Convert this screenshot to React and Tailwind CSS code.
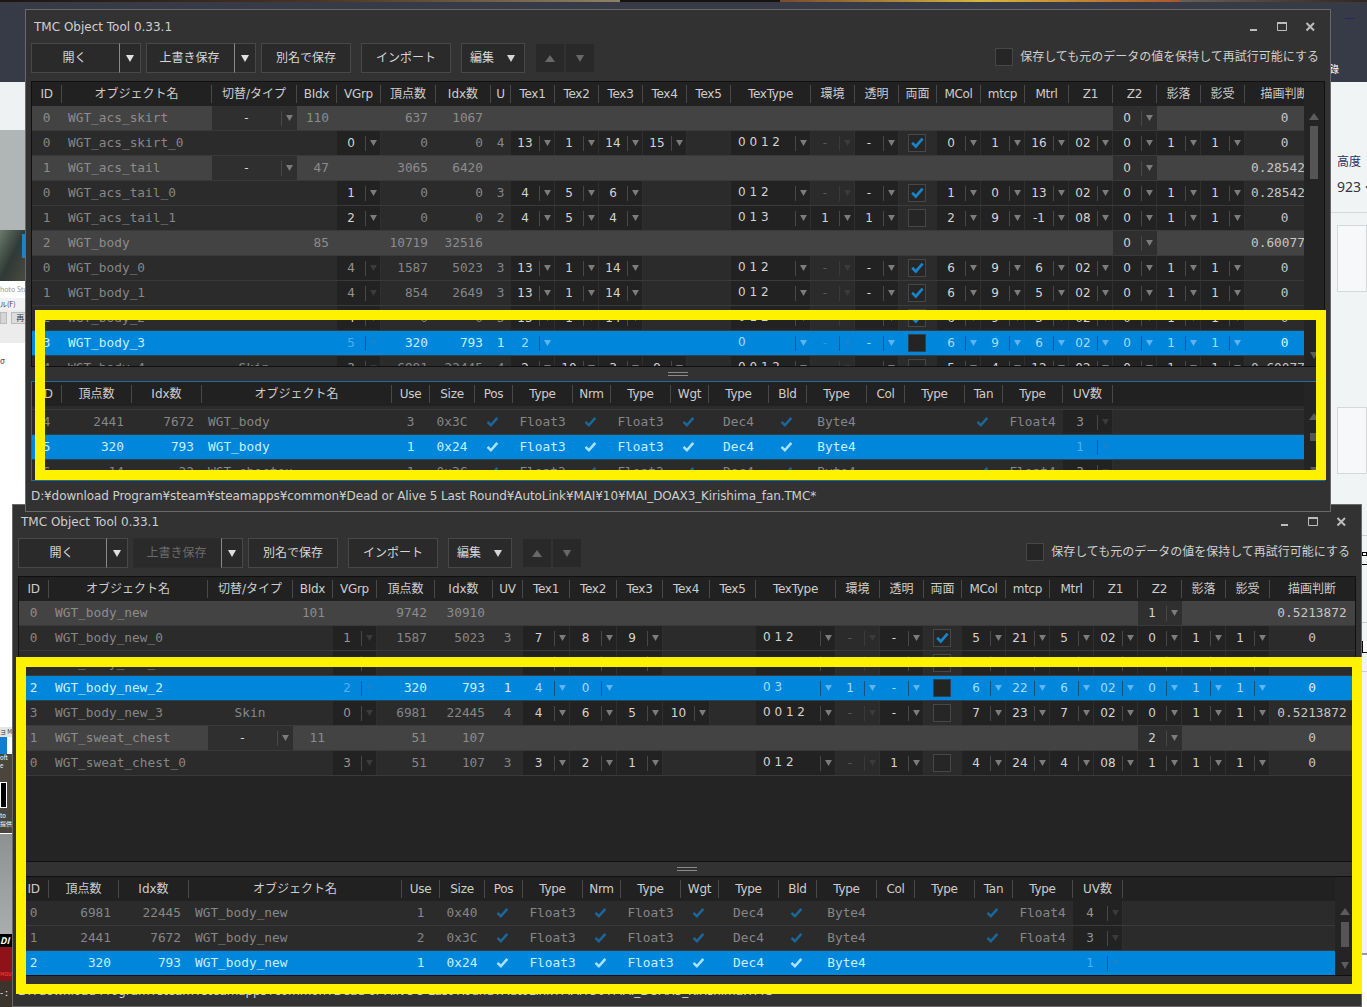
import React from 'react';
import { clsx } from 'clsx';

const MAIN_LABELS = [
    'ID', 'オブジェクト名', '切替/タイプ', 'BIdx', 'VGrp', '頂点数', 'Idx数', 'UV',
    'Tex1', 'Tex2', 'Tex3', 'Tex4', 'Tex5', 'TexType', '環境', '透明', '両面',
    'MCol', 'mtcp', 'Mtrl', 'Z1', 'Z2', '影落', '影受', '描画判断',
];

const SUB_LABELS = [
    'ID', '頂点数', 'Idx数', 'オブジェクト名', 'Use', 'Size', 'Pos', 'Type', 'Nrm', 'Type',
    'Wgt', 'Type', 'Bld', 'Type', 'Col', 'Type', 'Tan', 'Type', 'UV数',
];

const FAN = {
    mainWidths: [30, 150, 85, 40, 44, 55, 55, 20, 44, 44, 44, 44, 44, 80, 44, 44, 38, 44, 44, 44, 44, 44, 44, 44, 80],
    subWidths: [30, 70, 70, 190, 38, 45, 38, 60, 38, 60, 38, 60, 38, 60, 38, 60, 38, 60, 50],
    main: [
        { group: true, id: 0, name: 'WGT_acs_skirt', type: '-', bidx: 110, vtx: 637, idx: 1067, z2: 0, judge: '0' },
        { id: 0, name: 'WGT_acs_skirt_0', vgrp: 0, vtx: 0, idx: 0, uv: 4, tex: [13, 1, 14, 15], texType: '0 0 1 2', env: '-', alpha: '-', both: true, params: ['0', '1', '16', '02', '0', '1', '1'], judge: '0' },
        { group: true, id: 1, name: 'WGT_acs_tail', type: '-', bidx: 47, vtx: 3065, idx: 6420, z2: 0, judge: '0.28542' },
        { id: 0, name: 'WGT_acs_tail_0', vgrp: 1, vtx: 0, idx: 0, uv: 3, tex: [4, 5, 6], texType: '0 1 2', env: '-', alpha: '-', both: true, params: ['1', '0', '13', '02', '0', '1', '1'], judge: '0.28542' },
        { id: 1, name: 'WGT_acs_tail_1', vgrp: 2, vtx: 0, idx: 0, uv: 2, tex: [4, 5, 4], texType: '0 1 3', env: '1', alpha: '1', both: false, params: ['2', '9', '-1', '08', '0', '1', '1'], judge: '0' },
        { group: true, id: 2, name: 'WGT_body', bidx: 85, vtx: 10719, idx: 32516, z2: 0, judge: '0.60077' },
        { id: 0, name: 'WGT_body_0', vgrp: 4, locked: true, vtx: 1587, idx: 5023, uv: 3, tex: [13, 1, 14], texType: '0 1 2', env: '-', alpha: '-', both: true, params: ['6', '9', '6', '02', '0', '1', '1'], judge: '0' },
        { id: 1, name: 'WGT_body_1', vgrp: 4, locked: true, vtx: 854, idx: 2649, uv: 3, tex: [13, 1, 14], texType: '0 1 2', env: '-', alpha: '-', both: true, params: ['6', '9', '5', '02', '0', '1', '1'], judge: '0' },
        { id: 2, name: 'WGT_body_2', vgrp: 4, vtx: 0, idx: 0, uv: 3, tex: [13, 1, 14], texType: '0 1 2', env: '-', alpha: '-', both: true, params: ['6', '9', '3', '02', '0', '1', '1'], judge: '0' },
        { selected: true, id: 3, name: 'WGT_body_3', vgrp: 5, locked: true, vtx: 320, idx: 793, uv: 1, tex: [2], texType: '0', env: '-', alpha: '-', both: false, params: ['6', '9', '6', '02', '0', '1', '1'], judge: '0' },
        { id: 4, name: 'WGT_body_4', type: 'Skin', vgrp: 3, locked: true, vtx: 6981, idx: 22445, uv: 4, tex: [2, 10, 3, 9], texType: '0 0 1 2', env: '-', alpha: '-', both: false, params: ['5', '4', '12', '02', '0', '1', '1'], judge: '0.60077' },
    ],
    sub: [
        { id: 4, vtx: 2441, idx: 7672, name: 'WGT_body', use: 3, size: '0x3C', tan: true, uv: 3 },
        { selected: true, id: 5, vtx: 320, idx: 793, name: 'WGT_body', use: 1, size: '0x24', uv: 1 },
        { id: 6, vtx: 14, idx: 22, name: 'WGT_choctex', use: 1, size: '0x3C', tan: true, uv: 3 },
    ],
};

const BODY_NEW = {
    mainWidths: [30, 159, 85, 40, 44, 58, 58, 30, 47, 47, 46, 47, 46, 80, 44, 44, 38, 44, 44, 44, 44, 44, 44, 44, 85],
    subWidths: [30, 70, 70, 213, 38, 45, 38, 60, 38, 60, 38, 60, 38, 60, 38, 60, 38, 60, 50],
    main: [
        { group: true, id: 0, name: 'WGT_body_new', bidx: 101, vtx: 9742, idx: 30910, z2: 1, judge: '0.5213872' },
        { id: 0, name: 'WGT_body_new_0', vgrp: 1, locked: true, vtx: 1587, idx: 5023, uv: 3, tex: [7, 8, 9], texType: '0 1 2', env: '-', alpha: '-', both: true, params: ['5', '21', '5', '02', '0', '1', '1'], judge: '0' },
        { id: 1, name: 'WGT_body_new_1', vgrp: 1, locked: true, vtx: 854, idx: 2649, uv: 3, tex: [7, 8, 9], texType: '0 1 2', env: '-', alpha: '-', both: false, params: ['6', '22', '6', '02', '0', '1', '1'], judge: '0' },
        { selected: true, id: 2, name: 'WGT_body_new_2', vgrp: 2, locked: true, vtx: 320, idx: 793, uv: 1, tex: [4, 0], texType: '0 3', env: '1', alpha: '-', both: false, params: ['6', '22', '6', '02', '0', '1', '1'], judge: '0' },
        { id: 3, name: 'WGT_body_new_3', type: 'Skin', vgrp: 0, locked: true, vtx: 6981, idx: 22445, uv: 4, tex: [4, 6, 5, 10], texType: '0 0 1 2', env: '-', alpha: '-', both: false, params: ['7', '23', '7', '02', '0', '1', '1'], judge: '0.5213872' },
        { group: true, id: 1, name: 'WGT_sweat_chest', type: '-', bidx: 11, vtx: 51, idx: 107, z2: 2, judge: '0' },
        { id: 0, name: 'WGT_sweat_chest_0', vgrp: 3, locked: true, vtx: 51, idx: 107, uv: 3, tex: [3, 2, 1], texType: '0 1 2', env: '-', alpha: '1', both: false, params: ['4', '24', '4', '08', '1', '1', '1'], judge: '0' },
    ],
    sub: [
        { id: 0, vtx: 6981, idx: 22445, name: 'WGT_body_new', use: 1, size: '0x40', tan: true, uv: 4 },
        { id: 1, vtx: 2441, idx: 7672, name: 'WGT_body_new', use: 2, size: '0x3C', tan: true, uv: 3 },
        { selected: true, id: 2, vtx: 320, idx: 793, name: 'WGT_body_new', use: 1, size: '0x24', uv: 1 },
    ],
};

const Arrow = ({ up, className }) => (
    <svg width="10" height="7" viewBox="0 0 10 7" className={clsx('shrink-0 fill-current', className)}>
        <path d={up ? 'M5 0L10 7H0z' : 'M1 0h8L5 7z'} />
    </svg>
);

const Check = ({ className }) => (
    <svg width="13" height="12" viewBox="0 0 13 12" fill="none" strokeWidth="2.7" className={clsx('stroke-current', className)}>
        <path d="M1.2 5.8L4.8 9.4L11.6 1.6" />
    </svg>
);

// Text cell of a table row, in the fixed pitch font
const Cell = ({ w, align = 'center', className, children }) => (
    <div
        style={{ width: w }}
        className={clsx(
            'shrink-0 flex items-center whitespace-nowrap',
            align === 'center' && 'justify-center pr-px',
            align === 'right' && 'justify-end pr-2',
            align === 'left' && 'pl-1.5',
            className
        )}
    >
        {children}
    </div>
);

const SelectCell = ({ w, value, row, state = 'on', left }) => {
    const sel = row.selected;
    return (
        <div
            style={{ width: w }}
            className={clsx(
                "shrink-0 flex items-center border-r font-['DejaVu_Sans',sans-serif] text-[12px]",
                sel && 'border-transparent',
                !sel && row.group && 'bg-[#2f2f2f] border-[#2f2f2f]',
                !sel && !row.group && state === 'off' && 'bg-[#2b2b2b] border-[#313131]',
                !sel && !row.group && state !== 'off' && 'bg-[#222] border-[#2f2f2f]',
                sel && (state === 'on' ? 'text-[#a6dcff]' : state === 'locked' ? 'text-[#50b0f2]' : 'text-[#2f97e0]'),
                !sel && (state === 'on' ? 'text-[#d4d4d4]' : state === 'locked' ? 'text-[#959595]' : 'text-[#5a5a5a]')
            )}
        >
            <span className={clsx('flex-1 whitespace-nowrap', left ? 'pl-[7px] pb-0.5' : 'text-center')}>{value}</span>
            <span
                className={clsx(
                    'flex h-[15px] w-[15px] items-center justify-center border-l',
                    sel ? 'border-[#17517d]' : state === 'off' ? 'border-[#3a3a3a]' : 'border-[#484848]',
                    sel && (state === 'on' ? 'text-[#5fb4ef]' : 'text-[#1583cf]'),
                    !sel && (state === 'on' ? 'text-[#7c7c7c]' : 'text-[#3b3b3b]')
                )}
            >
                <Arrow className="mb-px h-1.5 w-[9px]" />
            </span>
        </div>
    );
};

const rowClass = (row) =>
    clsx(
        "flex h-[25px] shrink-0 border-b font-['DejaVu_Sans_Mono','Noto_Sans_CJK_JP',monospace] text-[12.8px]",
        row.selected && 'bg-[#0087dc] border-[#26435a] text-[#c9efff]',
        row.group && 'bg-[#434343] border-[#393939] text-[#8c8c8c]',
        !row.selected && !row.group && 'bg-[#2b2b2b] border-[#3a3a3a] text-[#868686]'
    );

const MainRow = ({ row, widths }) => {
    const w = widths;
    const tex = row.tex || [];
    return (
        <div className={rowClass(row)}>
            <Cell w={w[0]}>{row.id}</Cell>
            <Cell w={w[1]} align="left">{row.name}</Cell>
            {row.type === '-' ? <SelectCell w={w[2]} value="-" row={row} /> : <Cell w={w[2]}>{row.type}</Cell>}
            <Cell w={w[3]} align="right">{row.bidx}</Cell>
            {row.group ? <Cell w={w[4]} /> : <SelectCell w={w[4]} value={row.vgrp} row={row} state={row.locked ? 'locked' : 'on'} />}
            <Cell w={w[5]} align="right">{row.vtx}</Cell>
            <Cell w={w[6]} align="right">{row.idx}</Cell>
            <Cell w={w[7]}>{row.uv}</Cell>
            {[0, 1, 2, 3, 4].map((i) =>
                tex[i] === undefined ? <Cell key={i} w={w[8 + i]} /> : <SelectCell key={i} w={w[8 + i]} value={tex[i]} row={row} />
            )}
            {row.group ? (
                <>
                    {w.slice(13, 21).map((cw, i) => <Cell key={i} w={cw} />)}
                    <SelectCell w={w[21]} value={row.z2} row={row} />
                    <Cell w={w[22]} />
                    <Cell w={w[23]} />
                </>
            ) : (
                <>
                    <SelectCell w={w[13]} value={row.texType} row={row} left />
                    <SelectCell w={w[14]} value={row.env} row={row} state={row.env === '-' ? 'off' : 'on'} />
                    <SelectCell w={w[15]} value={row.alpha} row={row} />
                    <Cell w={w[16]}>
                        <span className={clsx('mr-px flex size-[18px] items-center justify-center border', row.selected ? 'bg-[#242424] border-[#2b4255]' : 'bg-[#262626] border-[#474747]')}>
                            {row.both && <Check className="text-[#1b84c9]" />}
                        </span>
                    </Cell>
                    {row.params.map((p, i) => <SelectCell key={i} w={w[17 + i]} value={p} row={row} />)}
                </>
            )}
            <Cell
                w={w[24]}
                align={row.judge.length === 7 ? 'left' : 'center'}
                className={row.selected ? 'text-[#d9f4ff]' : 'text-[#c6c6c6]'}
            >
                {row.judge}
            </Cell>
        </div>
    );
};

const SubRow = ({ row, widths }) => {
    const w = widths;
    const tick = <Check className={clsx('mr-0.5 scale-95', row.selected ? 'text-[#a8e2ff]' : 'text-[#1c6699]')} />;
    const attrs = [tick, 'Float3', tick, 'Float3', tick, 'Dec4', tick, 'Byte4', null, null, row.tan && tick, row.tan && 'Float4'];
    return (
        <div className={rowClass(row)}>
            <Cell w={w[0]}>{row.id}</Cell>
            <Cell w={w[1]} align="right">{row.vtx}</Cell>
            <Cell w={w[2]} align="right">{row.idx}</Cell>
            <Cell w={w[3]} align="left">{row.name}</Cell>
            <Cell w={w[4]}>{row.use}</Cell>
            <Cell w={w[5]}>{row.size}</Cell>
            {attrs.map((a, i) => <Cell key={i} w={w[6 + i]}>{a}</Cell>)}
            <SelectCell w={w[18]} value={row.uv} row={row} state="locked" />
        </div>
    );
};

const isLatin = (label) => /^[\x20-\x7e]+$/.test(label);

const HeaderRow = ({ labels, widths, openEnd }) => (
    <div className="flex h-6 shrink-0 items-center overflow-hidden bg-[#212121] text-[#cdcdcd]">
        {labels.map((label, i) => (
            <div
                key={i}
                style={{ width: widths[i] }}
                className={clsx(
                    'flex h-[18px] shrink-0 items-center justify-center overflow-hidden whitespace-nowrap border-r',
                    isLatin(label) && 'tracking-[-0.3px]',
                    openEnd && i === labels.length - 1 ? 'border-transparent' : 'border-[#484848]'
                )}
            >
                {widths[i] < 25 ? label[0] : label}
            </div>
        ))}
    </div>
);

const ScrollBar = ({ children }) => (
    <div className="flex w-5 shrink-0 flex-col items-center pt-[31px] text-[#5c5c5c]">
        <Arrow up />
        {children}
        <Arrow />
    </div>
);

const Button = ({ className, disabled, children }) => (
    <div
        className={clsx(
            'flex h-[30px] items-center justify-center border bg-[#2a2a2a]',
            disabled ? 'border-[#2d2d2d] text-[#6b6b6b]' : 'border-[#484848] text-[#d6d6d6]',
            className
        )}
    >
        {children}
    </div>
);

const SplitButton = ({ label, disabled }) => (
    <div className="flex">
        <Button disabled={disabled} className="w-[88px] border-r-0 pr-0.5">{label}</Button>
        <div className="flex h-[30px] w-[22px] items-center justify-center border border-[#484848] border-l-[#8a8a8a] bg-[#2a2a2a] text-[#e0e0e0]">
            <Arrow />
        </div>
    </div>
);

const ToolWindow = ({ data, path, saveDisabled, focusSub, mainBar, subBar, className }) => (
    <div
        className={clsx(
            "absolute flex h-[503px] flex-col border border-[#696969] bg-[#323232] px-[5px] font-['DejaVu_Sans','Noto_Sans_CJK_JP',sans-serif] text-[12px] text-[#cfcfcf]",
            className
        )}
    >
        <div className="flex h-[33px] shrink-0 items-center pl-[3px] pr-2.5">
            <span className="flex-1">TMC Object Tool 0.33.1</span>
            <svg width="66" height="12" viewBox="0 0 66 12" fill="none" className="stroke-[#bdbdbd]">
                <path d="M1 9H8" strokeWidth="2" />
                <path d="M28.5 1.5h9v8h-9z" />
                <path d="M28 2H38" strokeWidth="2" />
                <path d="M57.5 2l7.5 7.5M65 2l-7.5 7.5" strokeWidth="2" />
            </svg>
        </div>

        <div className="flex h-[38px] shrink-0 items-start">
            <SplitButton label="開く" />
            <div className="ml-[5px]"><SplitButton label="上書き保存" disabled={saveDisabled} /></div>
            <Button className="ml-[5px] w-[90px]">別名で保存</Button>
            <Button className="ml-2.5 w-[90px]">インポート</Button>
            <Button className="ml-2.5 w-16 gap-3">編集<Arrow /></Button>
            <div className="ml-[11px] flex gap-0.5 pt-px text-[#686868]">
                <div className="flex size-7 items-center justify-center bg-[#292929]"><Arrow up /></div>
                <div className="flex size-7 items-center justify-center bg-[#292929]"><Arrow /></div>
            </div>
            <div className="ml-auto flex items-center gap-[7px] pr-1.5 pt-[5px]">
                <span className="size-[18px] border border-[#474747] bg-[#262626]" />
                保存しても元のデータの値を保持して再試行可能にする
            </div>
        </div>

        <div className="flex h-[286px] shrink-0 border border-[#101010] bg-[#242424]">
            <div className="flex min-w-0 flex-1 flex-col overflow-hidden">
                <HeaderRow labels={MAIN_LABELS} widths={data.mainWidths} openEnd />
                <div className="flex min-h-0 flex-1 flex-col overflow-hidden">
                    {data.main.map((row, i) => <MainRow key={i} row={row} widths={data.mainWidths} />)}
                </div>
            </div>
            {mainBar}
        </div>

        <div className="flex h-3.5 shrink-0 items-center justify-center">
            <span className="h-1 w-5 border-y border-[#8a8a8a]" />
        </div>

        <div className={clsx('flex h-[100px] shrink-0 border bg-[#242424]', focusSub ? 'border-[#1d6ea3]' : 'border-[#101010]')}>
            <div className="flex min-w-0 flex-1 flex-col overflow-hidden">
                <HeaderRow labels={SUB_LABELS} widths={data.subWidths} />
                <div className="flex min-h-0 flex-1 flex-col overflow-hidden">
                    {/* Bottom edge of the row that is scrolled out */}
                    {focusSub && <div className="h-1 shrink-0 border-b border-[#3a3a3a] bg-[#2b2b2b]" />}
                    {data.sub.map((row, i) => <SubRow key={i} row={row} widths={data.subWidths} />)}
                </div>
            </div>
            {subBar}
        </div>

        <div className="flex flex-1 items-center whitespace-nowrap tracking-[-0.1px]">{path}</div>
    </div>
);

// Slices of the browser and the desktop that stick out beside the tool windows
const Backdrop = () => (
    <div className="flex h-full w-full flex-col overflow-hidden bg-white font-['Noto_Sans_CJK_JP',sans-serif]">
        <div className="flex h-0.5 shrink-0">
            <div className="w-[620px] bg-linear-to-r from-[#1c1512] via-[#4a3322] to-[#8f8262]" />
            <div className="w-40 bg-[#17110f]" />
            <div className="w-[400px] bg-linear-to-r from-[#7a4a2c] via-[#d8b63e] to-[#a8562c]" />
            <div className="flex-1 bg-linear-to-r from-[#6b6058] to-[#33261f]" />
        </div>
        <div className="flex min-h-0 flex-1 justify-between">
            <div className="flex w-[26px] flex-col overflow-hidden whitespace-nowrap">
                <div className="h-20 shrink-0 bg-[#373b47]" />
                <div className="h-12 shrink-0 bg-[#eef2f3]" />
                <div className="h-[100px] shrink-0 bg-[#b0b5b5]" />
                <div className="flex h-[51px] shrink-0 justify-end bg-linear-to-br from-[#6b7a6c] via-[#2f3a36] to-[#4d4a44]">
                    <div className="mt-1 h-6 w-1 bg-[#1c84c6]" />
                </div>
                <div className="h-[17px] shrink-0 text-[7px] leading-[17px] text-[#999]">hoto Stu</div>
                <div className="h-3 shrink-0 bg-[#f2f2f2] text-[7px] leading-3 text-[#444]">ル(F)</div>
                <div className="flex h-[33px] shrink-0 gap-1 bg-[#ececec] pt-0.5">
                    <div className="h-3 w-2 border border-[#bbb] bg-[#d5d5d5]" />
                    <div className="h-3 w-4 border border-[#bbb] bg-[#ddd] pl-1 text-[8px] leading-[10px] text-[#333]">再</div>
                </div>
                <div className="h-[384px] shrink-0 bg-white pt-3 text-[8px] leading-3 text-[#333]">σ</div>
                <div className="h-[10px] shrink-0 bg-[#e5e5e5] text-[6px] leading-[10px] text-[#333]">ヨ M</div>
                <div className="h-[17px] w-[7px] shrink-0 bg-[#0f7fd4]" />
                <div className="flex h-[79px] shrink-0 flex-col bg-[#4b463d] text-[6px] leading-[8px] text-white">
                    <span>oft</span>
                    <span>e</span>
                    <div className="mt-3 flex h-[26px] w-[7px] flex-col justify-around border border-white bg-black" />
                    <span className="mt-1">to</span>
                    <span>提供</span>
                </div>
                <div className="h-[101px] shrink-0 border-t border-white bg-linear-to-b from-[#8d9192] to-[#a9adae]" />
                <div className="h-[13px] shrink-0 bg-black text-[9px] font-bold italic leading-[13px] text-white">DI</div>
                <div className="h-[34px] shrink-0 bg-[#8f1218] pt-5 text-[5px] font-bold leading-[14px] text-[#ff2a2a]">MOU</div>
                <div className="flex-1 bg-[#3a342d] text-[9px] leading-6 text-white">- :</div>
            </div>
            <div className="flex w-9 flex-col overflow-hidden whitespace-nowrap bg-[#f0f4f5] text-[#2b2f66]">
                <div className="h-20 shrink-0 bg-[#373b47] pt-4">
                    <div className="ml-3.5 h-px w-2.5 bg-[#23285f]" />
                    <div className="-ml-0.5 pt-11 text-[10px] leading-[12px] text-white">錄</div>
                </div>
                <div className="h-[131px] shrink-0 border-b border-[#d4d8da] pl-1.5 pt-[70px] text-[12px]">
                    <div className="leading-[18px]">高度</div>
                    <div className="pt-2 font-['Noto_Sans'] text-[14px] leading-[18px] text-[#33373f]">923 ·</div>
                </div>
                <div className="ml-1.5 mt-3 h-[67px] shrink-0 border border-[#d4d8da] bg-[#f6f8f9]" />
                <div className="ml-1.5 mt-[115px] h-[67px] shrink-0 border border-[#d4d8da] bg-[#f6f8f9]" />
                <div className="mt-[42px] h-5 shrink-0 border-b border-[#ccc]" />
                <div className="ml-[31px] mt-4 h-1 shrink-0 border border-black bg-white" />
                <div className="ml-[31px] mt-2 h-px shrink-0 bg-black" />
                <div className="mt-[57px] h-px shrink-0 bg-[#ccc]" />
                <div className="ml-[31px] mt-[18px] h-3 shrink-0 border-b border-l border-black bg-white" />
                <div className="mt-[18px] h-[284px] shrink-0 border-b-2 border-t border-b-[#999] border-t-[#ccc]" />
                <div className="flex-1 bg-white" />
            </div>
        </div>
    </div>
);

const App = () => (
    <div className="relative h-[1007px] w-[1367px] overflow-hidden">
        <Backdrop />
        <div className="absolute left-[25px] top-0.5 h-[7px] w-[1306px] bg-[#373b47]" />

        <ToolWindow
            className="left-[12px] top-[504px] w-[1350px]"
            data={BODY_NEW}
            saveDisabled
            path="D:¥download Program¥steam¥steamapps¥common¥Dead or Alive 5 Last Round¥AutoLink¥MAI¥50¥MAI_DOAX3_Kirishima.TMC"
            subBar={
                <ScrollBar>
                    <div className="mb-[15px] mt-[7px] h-[25px] w-2 bg-[#555]" />
                </ScrollBar>
            }
        />
        <ToolWindow
            className="left-[25px] top-[9px] w-[1306px]"
            data={FAN}
            focusSub
            path="D:¥download Program¥steam¥steamapps¥common¥Dead or Alive 5 Last Round¥AutoLink¥MAI¥10¥MAI_DOAX3_Kirishima_fan.TMC*"
            mainBar={
                <ScrollBar>
                    <div className="mb-[173px] mt-[6px] h-[53px] w-2 bg-[#555]" />
                </ScrollBar>
            }
            subBar={
                <ScrollBar>
                    <div className="mb-[26px] mt-[13px] h-2 w-2 bg-[#555]" />
                </ScrollBar>
            }
        />

        {/* Highlighter frames */}
        <div className="absolute left-[35px] top-[310px] h-[170px] w-[1291px] border-[10px] border-[#fff200]" />
        <div className="absolute left-[16px] top-[657px] h-[337px] w-[1346px] border-[10px] border-[#fff200]" />
    </div>
);

export default App;
